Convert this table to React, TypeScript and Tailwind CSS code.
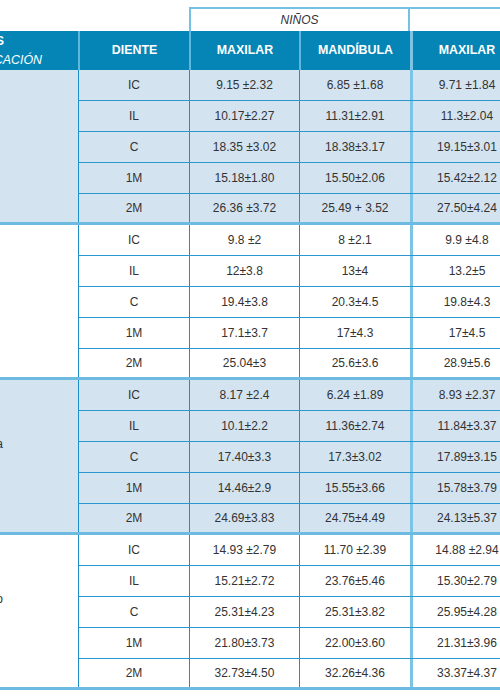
import React from "react";

type Row = [string, string, string, string];

const groups: { fill: boolean; label: [string, string] | null; rows: Row[] }[] = [
  {
    fill: true,
    label: null,
    rows: [
      ["IC", "9.15 ±2.32", "6.85 ±1.68", "9.71 ±1.84"],
      ["IL", "10.17±2.27", "11.31±2.91", "11.3±2.04"],
      ["C", "18.35 ±3.02", "18.38±3.17", "19.15±3.01"],
      ["1M", "15.18±1.80", "15.50±2.06", "15.42±2.12"],
      ["2M", "26.36 ±3.72", "25.49 + 3.52", "27.50±4.24"],
    ],
  },
  {
    fill: false,
    label: null,
    rows: [
      ["IC", "9.8 ±2", "8 ±2.1", "9.9 ±4.8"],
      ["IL", "12±3.8", "13±4", "13.2±5"],
      ["C", "19.4±3.8", "20.3±4.5", "19.8±4.3"],
      ["1M", "17.1±3.7", "17±4.3", "17±4.5"],
      ["2M", "25.04±3", "25.6±3.6", "28.9±5.6"],
    ],
  },
  {
    fill: true,
    label: ["Guatemala", "2014"],
    rows: [
      ["IC", "8.17 ±2.4", "6.24 ±1.89", "8.93 ±2.37"],
      ["IL", "10.1±2.2", "11.36±2.74", "11.84±3.37"],
      ["C", "17.40±3.3", "17.3±3.02", "17.89±3.15"],
      ["1M", "14.46±2.9", "15.55±3.66", "15.78±3.79"],
      ["2M", "24.69±3.83", "24.75±4.49", "24.13±5.37"],
    ],
  },
  {
    fill: false,
    label: ["México", "2016"],
    rows: [
      ["IC", "14.93 ±2.79", "11.70 ±2.39", "14.88 ±2.94"],
      ["IL", "15.21±2.72", "23.76±5.46", "15.30±2.79"],
      ["C", "25.31±4.23", "25.31±3.82", "25.95±4.28"],
      ["1M", "21.80±3.73", "22.00±3.60", "21.31±3.96"],
      ["2M", "32.73±4.50", "32.26±4.36", "33.37±4.37"],
    ],
  },
];

function Group({ g }: { g: (typeof groups)[number] }) {
  const bg = g.fill ? "bg-[#d4e3f0]" : "bg-white";
  return (
    <div className={`flex h-[155px] border-b-[3px] border-[#6dbbe0] ${bg}`}>
      <div className="w-[300px] -ml-[222px] shrink-0 overflow-hidden flex flex-col justify-center whitespace-nowrap text-right leading-[19px] text-[12px] text-[#333]">
        {g.label && (
          <>
            <div className="pr-[75px] -mt-[4px]">{g.label[0]}</div>
            <div className="pr-[95px]">{g.label[1]}</div>
          </>
        )}
      </div>
      <div className="flex flex-col">
        {g.rows.map((r, i) => {
          const last = i === g.rows.length - 1;
          return (
            <div
              key={i}
              className={`flex ${last ? "h-[28px]" : "h-[31px] border-b border-[#2a97cf]"} text-[12px] text-[#333]`}
            >
              <div className="w-[111px] border-l border-[#1f8fc8] flex items-center justify-center">{r[0]}</div>
              <div className="w-[110px] border-l border-[#1f8fc8] flex items-center justify-center">{r[1]}</div>
              <div className="w-[111px] border-l border-[#1f8fc8] flex items-center justify-center">{r[2]}</div>
              <div className="w-[111px] border-l-[3px] border-[#7cc4e5] flex items-center justify-center">{r[3]}</div>
            </div>
          );
        })}
      </div>
    </div>
  );
}

export default function App() {
  return (
    <div className="w-[500px] h-[700px] overflow-hidden bg-white font-['Liberation_Sans',Arial,sans-serif]">
      <div className="w-[560px]">
        {/* top header row */}
        <div className="flex h-[31px] pt-[7px]">
          <div className="w-[189px] shrink-0" />
          <div className="w-[221px] shrink-0 border-t-2 border-x-2 border-[#74c1e4] flex items-center justify-center italic text-[12px] text-[#333]">
            NIÑOS
          </div>
          <div className="w-[111px] shrink-0 border-t-2 border-[#74c1e4]" />
        </div>
        {/* blue header */}
        <div className="flex h-[39px] bg-[#0585b6] text-white text-[12.4px] font-bold">
          <div className="w-[300px] -ml-[222px] shrink-0 overflow-hidden flex flex-col justify-center whitespace-nowrap text-right leading-[19px]">
            <div className="pr-[74px]">ESTUDIOS</div>
            <div className="pr-[36px] italic font-normal">AÑO DE PUBLICACIÓN</div>
          </div>
          <div className="w-[111px] border-l-2 border-[#5fb6de] flex items-center justify-center">DIENTE</div>
          <div className="w-[110px] border-l-2 border-[#5fb6de] flex items-center justify-center">MAXILAR</div>
          <div className="w-[111px] border-l-2 border-[#5fb6de] flex items-center justify-center">MANDÍBULA</div>
          <div className="w-[111px] border-l-[3px] border-[#7cc4e5] flex items-center justify-center">MAXILAR</div>
        </div>
        {groups.map((g, i) => (
          <Group key={i} g={g} />
        ))}
      </div>
    </div>
  );
}
